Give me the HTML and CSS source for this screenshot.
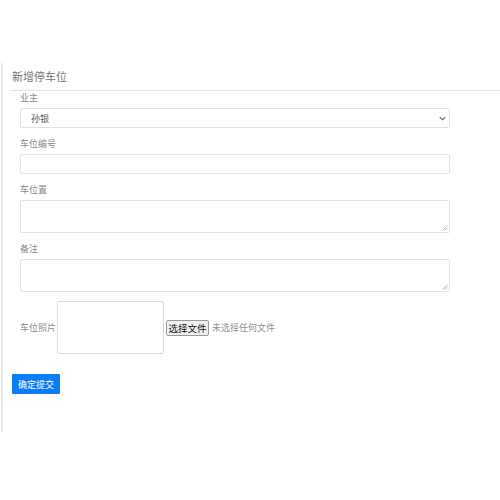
FILE: index.html
```html
<!DOCTYPE html>
<html lang="zh-CN">
<head>
<meta charset="utf-8">
<title>新增停车位</title>
<link rel="stylesheet" href="styles.css">
</head>
<body>
<div class="panel">
  <div class="title">新增停车位</div>
  <div class="rule"></div>
  <form class="form">
    <div class="group first">
      <label class="lbl">业主</label>
      <div class="wrap">
        <select class="ctrl select">
          <option>孙银</option>
        </select>
        <svg class="chev" width="7" height="5" viewBox="0 0 7 5"><path d="M0.8 1.2 L3.5 3.8 L6.2 1.2" fill="none" stroke="#555" stroke-width="1.1"/></svg>
      </div>
    </div>
    <div class="group">
      <label class="lbl">车位编号</label>
      <input class="ctrl input" type="text">
    </div>
    <div class="group">
      <label class="lbl">车位置</label>
      <div class="wrap">
        <textarea class="ctrl area"></textarea>
        <svg class="grip" width="6" height="6" viewBox="0 0 6 6"><path d="M5.5 0.5 L0.5 5.5 M5.5 3 L3 5.5" stroke="#a0a0a0" stroke-width="0.8"/></svg>
      </div>
    </div>
    <div class="group">
      <label class="lbl">备注</label>
      <div class="wrap">
        <textarea class="ctrl area"></textarea>
        <svg class="grip" width="6" height="6" viewBox="0 0 6 6"><path d="M5.5 0.5 L0.5 5.5 M5.5 3 L3 5.5" stroke="#a0a0a0" stroke-width="0.8"/></svg>
      </div>
    </div>
    <div class="photo-row">
      <span class="photo-lbl">车位照片</span>
      <div class="preview"></div>
      <span class="file-btn">选择文件</span>
      <span class="file-txt">未选择任何文件</span>
    </div>
  </form>
  <div class="actions">
    <button class="submit" type="button">确定提交</button>
  </div>
</div>
</body>
</html>
```
FILE: styles.css
```css
html, body {
  margin: 0;
  padding: 0;
  background: #fff;
  font-family: "Noto Sans CJK SC", "Noto Sans", sans-serif;
}
.panel {
  margin: 63px 0 0 1px;
  border-left: 2px solid #ebebeb;
  padding-left: 7px;
  height: 369px;
  box-sizing: border-box;
}
.title {
  padding: 5px 0 0 2px;
  font-size: 11px;
  line-height: 16px;
  color: #747474;
  margin-bottom: 6px;
}
.rule {
  border-top: 1px solid #e2e2e2;
  height: 0;
}
.form {
  padding-left: 10px;
  width: 430px;
}
.group {
  display: flex;
  flex-direction: column;
  margin-top: 9px;
}
.group.first {
  margin-top: 0;
}
.lbl {
  font-size: 9px;
  line-height: 13px;
  color: #8a8a8a;
  margin-bottom: 4px;
}
.wrap {
  position: relative;
  width: 430px;
}
.ctrl {
  box-sizing: border-box;
  width: 430px;
  border: 1px solid #e3e3e3;
  border-radius: 2px;
  background: #fff;
  font-family: inherit;
  font-size: 9px;
  color: #555;
  margin: 0;
  outline: none;
  display: block;
}
.select {
  height: 20px;
  padding: 0 4px 0 10px;
  appearance: none;
  -webkit-appearance: none;
}
.chev {
  position: absolute;
  right: 4px;
  top: 8px;
}
.input {
  height: 20px;
  padding: 0 7px;
}
.area {
  height: 33px;
  padding: 3px 7px;
  resize: none;
}
.grip {
  position: absolute;
  right: 2px;
  bottom: 2px;
}
.photo-row {
  display: flex;
  align-items: center;
  margin-top: 9px;
}
.photo-lbl {
  width: 37px;
  font-size: 9px;
  color: #8a8a8a;
}
.preview {
  box-sizing: border-box;
  width: 107px;
  height: 53px;
  border: 1px solid #dcdcdc;
  border-radius: 2px;
}
.file-btn {
  box-sizing: border-box;
  margin-left: 2px;
  width: 43px;
  height: 16px;
  line-height: 14px;
  text-align: center;
  font-size: 9.5px;
  color: #111;
  background: #efefef;
  border: 1px solid #9a9a9a;
  border-radius: 2px;
}
.file-txt {
  margin-left: 3px;
  font-size: 9px;
  color: #8f8f8f;
}
.actions {
  display: flex;
  padding-left: 2px;
  margin-top: 20px;
}
.submit {
  width: 48px;
  height: 20px;
  padding: 0;
  border: none;
  border-radius: 1px;
  background: #0a7cf6;
  color: #fff;
  font-family: inherit;
  font-size: 9px;
  cursor: pointer;
}
```
